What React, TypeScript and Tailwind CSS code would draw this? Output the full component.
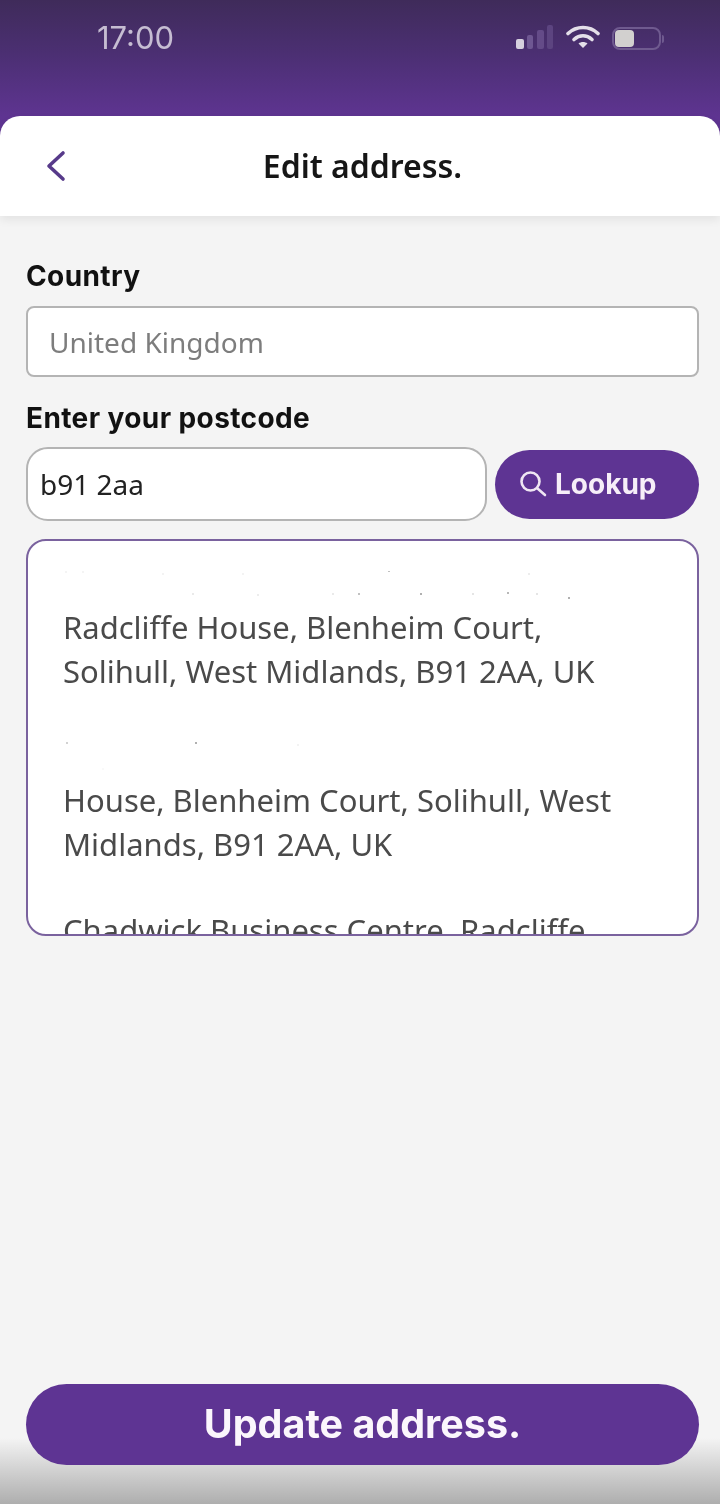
export default function App() {
  const addr = "font-['Noto_Sans',sans-serif] text-[31px] leading-[44px] text-[#4a4a4a]";
  return (
    <div className="relative flex h-[1504px] w-[720px] flex-col overflow-hidden bg-[#5e3491] blur-[0.5px]">
      {/* status bar */}
      <div className="flex h-[116px] shrink-0 items-start bg-gradient-to-b from-[#3f2b5a] via-[#4b2f72] via-45% to-[#5e3491] pt-[18px]">
        <span className="ml-[97px] font-['Inter',sans-serif] text-[31px] leading-[40px] text-[#c6bdd2]">17:00</span>
        <div className="ml-auto mr-[56px] mt-[6px] flex items-start gap-[12px]">
          <svg width="38" height="24" viewBox="0 0 38 24" className="-ml-[1px] mt-[1px]">
            <rect x="0" y="14" width="8" height="10" rx="2" fill="#d6d0de" />
            <rect x="11" y="10" width="6" height="14" rx="2" fill="#6e5792" />
            <rect x="21" y="5" width="7" height="19" rx="2" fill="#644b88" />
            <rect x="31" y="0" width="6" height="24" rx="2" fill="#5c4480" />
          </svg>
          <svg width="34" height="24" viewBox="0 0 34 24" fill="none" stroke="#e4dfe9" strokeWidth="3.6" strokeLinecap="round" className="mt-[1px]">
            <path d="M2 8.5C10.5 0.5 23.5 0.5 32 8.5" />
            <path d="M8 14.5C13.5 9.5 20.5 9.5 26 14.5" />
            <path d="M17 23l-4.5-4.6c2.5-2 6.5-2 9 0z" fill="#e4dfe9" stroke="none" />
          </svg>
          <div className="mt-[3px] flex items-center">
            <div className="flex h-[23px] w-[49px] items-center rounded-[8px] border-2 border-[#6f5a8f] p-[1px]">
              <div className="h-[17px] w-[19px] rounded-[4px] bg-[#d2d0cf]" />
            </div>
            <div className="ml-[1px] h-[8px] w-[2px] rounded-r bg-[#6f5a8f]" />
          </div>
        </div>
      </div>

      {/* header */}
      <div className="z-10 grid h-[100px] shrink-0 grid-cols-[1fr_auto_1fr] items-center rounded-t-[20px] bg-white shadow-[0_4px_10px_rgba(0,0,0,0.07)]">
        <svg width="24" height="34" viewBox="0 0 24 34" fill="none" stroke="#573a8a" strokeWidth="3.6" strokeLinecap="round" strokeLinejoin="round" className="ml-[44px]">
          <path d="M19 4L5 17L19 30" />
        </svg>
        <h1 className="ml-[5px] font-['Noto_Sans',sans-serif] text-[32px] font-semibold leading-[40px] text-[#161616]">Edit address.</h1>
        <span />
      </div>

      {/* body */}
      <div className="relative flex flex-1 flex-col bg-[#f4f4f4] pb-[39px] pl-[26px] pr-[21px]">
        <div className="pointer-events-none absolute inset-x-0 bottom-0 h-[66px] bg-gradient-to-b from-[#f4f4f4] to-[#aeaeae]" />
        <label className="mt-[43px] font-['Inter',sans-serif] text-[28px] font-bold leading-[34px] tracking-[0.4px] text-[#111111]">Country</label>
        <div className="mt-[13px] flex h-[71px] items-center rounded-[8px] border-2 border-[#b4b4b4] bg-white pl-[21px] font-['Noto_Sans',sans-serif] text-[28px] text-[#7d7d7d]">United Kingdom</div>
        <label className="mt-[24px] font-['Inter',sans-serif] text-[28px] font-bold leading-[34px] tracking-[0.4px] text-[#111111]">Enter your postcode</label>
        <div className="mt-[12px] flex items-center gap-[8px]">
          <div className="flex h-[74px] w-[461px] shrink-0 items-center rounded-[22px] border-2 border-[#b4b4b4] bg-white pl-[12px] font-['Noto_Sans',sans-serif] text-[28px] text-[#222222]">b91 2aa</div>
          <button className="flex h-[69px] w-[204px] shrink-0 items-center rounded-full bg-[#5e3493] pl-[24px] font-['Inter',sans-serif] text-[28px] font-bold text-[#f6eef8]">
            <svg width="28" height="28" viewBox="0 0 28 28" fill="none" stroke="#efe6f3" strokeWidth="2.6" strokeLinecap="round" className="mr-[8px]">
              <circle cx="11.5" cy="11.5" r="9" />
              <path d="M18.5 18.5L26 25" />
            </svg>
            Lookup
          </button>
        </div>
        <div className="mt-[18px] h-[397px] overflow-hidden rounded-[20px] border-2 border-[#7a629e] bg-white pl-[35px]">
          <svg width="520" height="30" viewBox="0 0 520 30" className="mt-[30px] block" fill="#8a8a8a">
            <circle cx="3" cy="1" r="0.7" opacity=".25" /><circle cx="20" cy="1" r="0.7" opacity=".25" />
            <circle cx="100" cy="3" r="0.7" opacity=".3" /><circle cx="180" cy="3" r="0.7" opacity=".3" />
            <circle cx="326" cy="0" r="1" opacity=".7" /><circle cx="466" cy="3" r="0.7" opacity=".4" />
            <circle cx="130" cy="23" r="0.8" opacity=".4" /><circle cx="195" cy="24" r="0.7" opacity=".4" />
            <circle cx="270" cy="23" r="0.8" opacity=".4" /><circle cx="296" cy="23" r="1" opacity=".7" />
            <circle cx="358" cy="23" r="1" opacity=".9" /><circle cx="410" cy="23" r="0.8" opacity=".5" />
            <circle cx="445" cy="22" r="1" opacity=".8" /><circle cx="474" cy="23" r="0.8" opacity=".5" />
            <circle cx="506" cy="27" r="1" opacity=".9" />
          </svg>
          <p className={addr + " mt-[4px]"}>Radcliffe House, Blenheim Court,<br />Solihull, West Midlands, B91 2AA, UK</p>
          <svg width="520" height="40" viewBox="0 0 520 40" className="mt-[44px] block" fill="#8a8a8a">
            <circle cx="4" cy="6" r="1" opacity=".5" /><circle cx="133" cy="6" r="1" opacity=".9" />
            <circle cx="235" cy="8" r="0.7" opacity=".3" /><circle cx="40" cy="32" r="0.7" opacity=".15" />
          </svg>
          <p className={addr + " mt-[1px]"}>House, Blenheim Court, Solihull, West<br />Midlands, B91 2AA, UK</p>
          <p className={addr + " mt-[42px] whitespace-nowrap"}>Chadwick Business Centre, Radcliffe</p>
        </div>
        <button className="relative mt-auto flex h-[81px] items-center justify-center rounded-full bg-[#5e3493] font-['Inter',sans-serif] text-[39.5px] font-bold text-[#fbf6fc]">Update address.</button>
      </div>
    </div>
  );
}
